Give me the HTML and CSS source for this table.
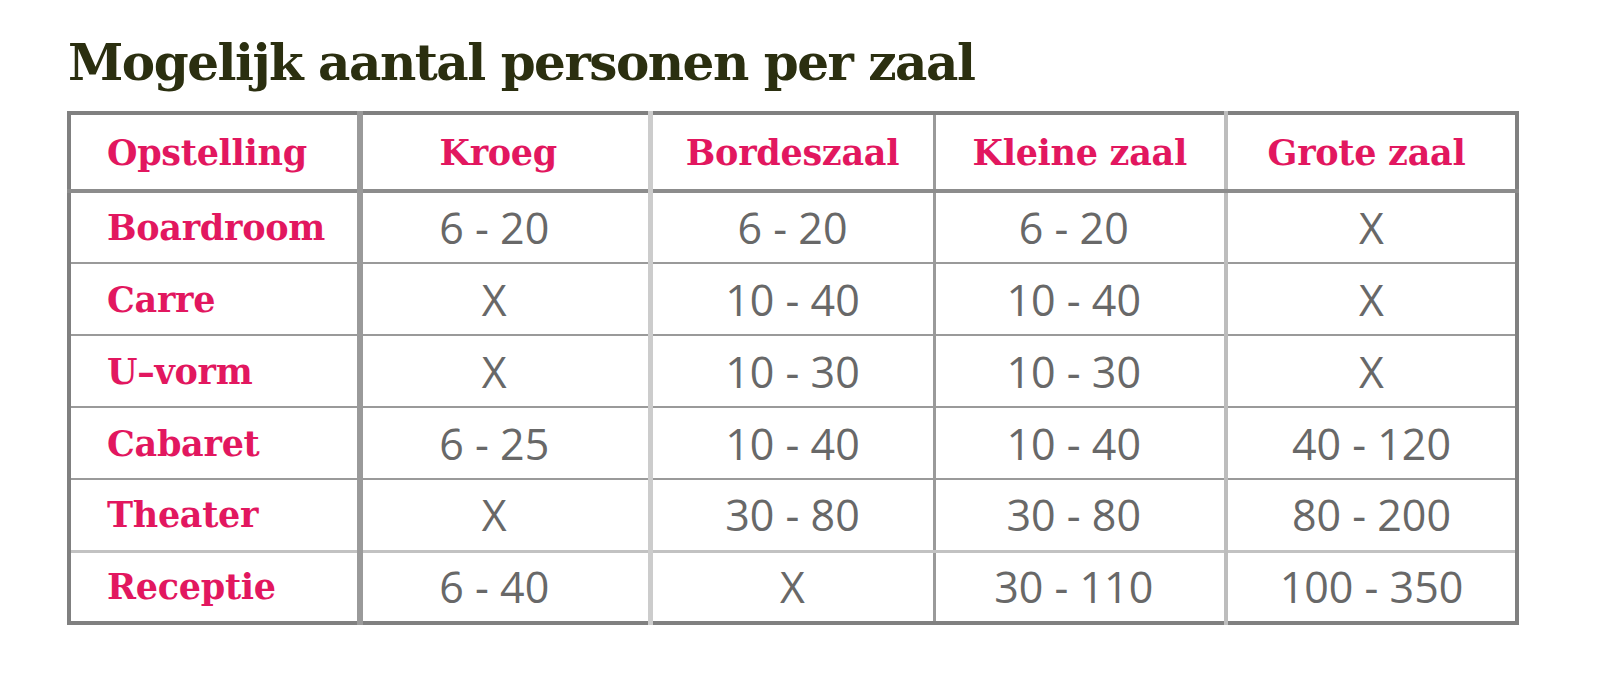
FILE: index.html
```html
<!DOCTYPE html>
<html lang="nl">
<head>
<meta charset="utf-8">
<title>Mogelijk aantal personen per zaal</title>
<link rel="stylesheet" href="styles.css">
</head>
<body>
<main class="page">
  <h1 class="title">Mogelijk aantal personen per zaal</h1>
  <table class="capacity">
    <colgroup>
      <col class="c1">
      <col class="c2">
      <col class="c3">
      <col class="c4">
      <col class="c5">
    </colgroup>
    <thead>
      <tr class="head">
        <th class="label">Opstelling</th>
        <th class="shift">Kroeg</th>
        <th>Bordeszaal</th>
        <th>Kleine zaal</th>
        <th class="shift-sm">Grote zaal</th>
      </tr>
    </thead>
    <tbody>
      <tr><th class="label">Boardroom</th><td>6 - 20</td><td>6 - 20</td><td>6 - 20</td><td>X</td></tr>
      <tr><th class="label">Carre</th><td>X</td><td>10 - 40</td><td>10 - 40</td><td>X</td></tr>
      <tr><th class="label">U–vorm</th><td>X</td><td>10 - 30</td><td>10 - 30</td><td>X</td></tr>
      <tr><th class="label">Cabaret</th><td>6 - 25</td><td>10 - 40</td><td>10 - 40</td><td>40 - 120</td></tr>
      <tr><th class="label">Theater</th><td>X</td><td>30 - 80</td><td>30 - 80</td><td>80 - 200</td></tr>
      <tr class="last"><th class="label">Receptie</th><td>6 - 40</td><td>X</td><td>30 - 110</td><td>100 - 350</td></tr>
    </tbody>
  </table>
</main>
</body>
</html>
```

FILE: styles.css
```css
html, body {
  margin: 0;
  padding: 0;
  background: #ffffff;
}

.page {
  padding: 33px 0 0 67px;
}

.title {
  margin: 0 0 19px 1px;
  font-family: "DejaVu Serif", "Liberation Serif", serif;
  font-weight: bold;
  font-size: 50px;
  line-height: 59px;
  color: #2b2f10;
  letter-spacing: -1.5px;
}

.capacity {
  width: 1448px;
  table-layout: fixed;
  border-collapse: collapse;
  border: 4px solid #808080;
}

.c1 { width: 291px; border-right: 6px solid #9a9a9a; }
.c2 { width: 290px; border-right: 5px solid #cccccc; }
.c3 { width: 284px; border-right: 3px solid #9a9a9a; }
.c4 { width: 292px; border-right: 4px solid #bdbdbd; }
.c5 { width: 291px; }

.capacity tr {
  height: 72px;
  border-bottom: 2px solid #9a9a9a;
}

.capacity tr.head {
  height: 78px;
  border-bottom: 4px solid #8c8c8c;
}

.capacity tbody tr:nth-child(5) {
  border-bottom: 3px solid #c2c2c2;
}

.capacity th {
  font-family: "DejaVu Serif", "Liberation Serif", serif;
  font-weight: bold;
  font-size: 35px;
  color: #e2175f;
  text-align: center;
  padding: 0;
  letter-spacing: -0.3px;
}

.capacity th.shift {
  padding-right: 14px;
}

.capacity th.shift-sm {
  padding-right: 10px;
}

.capacity th.label {
  text-align: left;
  padding-left: 36px;
}

.capacity td {
  font-family: "Open Sans", "Noto Sans", sans-serif;
  font-weight: 400;
  font-size: 43px;
  color: #686868;
  text-align: center;
  padding: 0;
}

.capacity td:nth-child(2) {
  padding-right: 22px;
}

.capacity td:nth-child(4) {
  padding-right: 12px;
}
```
